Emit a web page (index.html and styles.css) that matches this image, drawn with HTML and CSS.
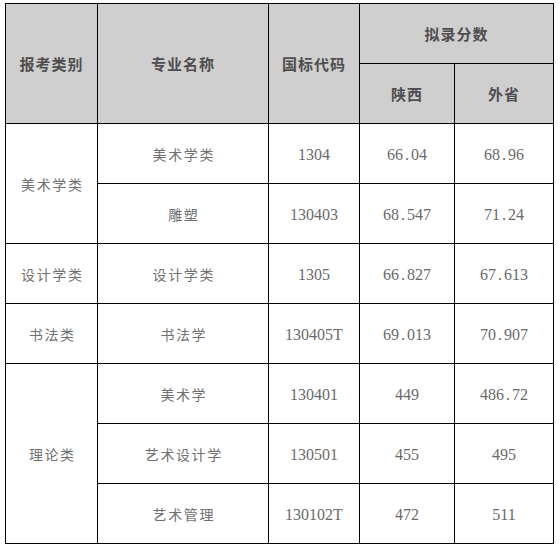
FILE: index.html
```html
<!DOCTYPE html>
<html lang="zh-CN">
<head>
<meta charset="utf-8">
<link rel="stylesheet" href="styles.css">
</head>
<body>
<div class="sheet">
  <div class="cell head span-r2">报考类别</div>
  <div class="cell head span-r2">专业名称</div>
  <div class="cell head span-r2">国标代码</div>
  <div class="cell head span-c2">拟录分数</div>
  <div class="cell head">陕西</div>
  <div class="cell head">外省</div>

  <div class="cell cjk span-r2">美术学类</div>
  <div class="cell cjk">美术学类</div>
  <div class="cell num">1304</div>
  <div class="cell num">66<span class="dot">.</span>04</div>
  <div class="cell num">68<span class="dot">.</span>96</div>
  <div class="cell cjk">雕塑</div>
  <div class="cell num">130403</div>
  <div class="cell num">68<span class="dot">.</span>547</div>
  <div class="cell num">71<span class="dot">.</span>24</div>

  <div class="cell cjk">设计学类</div>
  <div class="cell cjk">设计学类</div>
  <div class="cell num">1305</div>
  <div class="cell num">66<span class="dot">.</span>827</div>
  <div class="cell num">67<span class="dot">.</span>613</div>

  <div class="cell cjk">书法类</div>
  <div class="cell cjk">书法学</div>
  <div class="cell num">130405T</div>
  <div class="cell num">69<span class="dot">.</span>013</div>
  <div class="cell num">70<span class="dot">.</span>907</div>

  <div class="cell cjk span-r3">理论类</div>
  <div class="cell cjk">美术学</div>
  <div class="cell num">130401</div>
  <div class="cell num">449</div>
  <div class="cell num">486<span class="dot">.</span>72</div>
  <div class="cell cjk">艺术设计学</div>
  <div class="cell num">130501</div>
  <div class="cell num">455</div>
  <div class="cell num">495</div>
  <div class="cell cjk">艺术管理</div>
  <div class="cell num">130102T</div>
  <div class="cell num">472</div>
  <div class="cell num">511</div>
</div>
</body>
</html>
```

FILE: styles.css
```css
html, body {
  margin: 0;
  padding: 0;
  background: #ffffff;
}

body {
  padding: 3px 0 0 5px;
}

.sheet {
  display: grid;
  grid-template-columns: 91px 170px 90px 94px 98px;
  grid-template-rows: repeat(9, 59px);
  gap: 1px;
  padding: 1px;
  background: #000000;
  width: max-content;
}

.cell {
  background: #ffffff;
  display: flex;
  align-items: center;
  justify-content: center;
  color: #707070;
  font-family: "Noto Sans CJK SC", "DejaVu Sans", sans-serif;
}

.head {
  background: #d0cfd0;
  color: #4e4e4e;
  font-weight: bold;
  font-size: 15px;
  letter-spacing: 1px;
}

.cjk {
  font-size: 14px;
  letter-spacing: 1.6px;
  text-indent: 1.6px;
}

.num {
  font-family: "Liberation Serif", "DejaVu Serif", serif;
  font-size: 16px;
  color: #6a6a6a;
  padding-top: 2px;
}

.dot {
  display: inline-block;
  width: 8px;
  text-align: center;
}

.span-r2 { grid-row: span 2; }
.span-r3 { grid-row: span 3; }
.span-c2 { grid-column: span 2; }
```
